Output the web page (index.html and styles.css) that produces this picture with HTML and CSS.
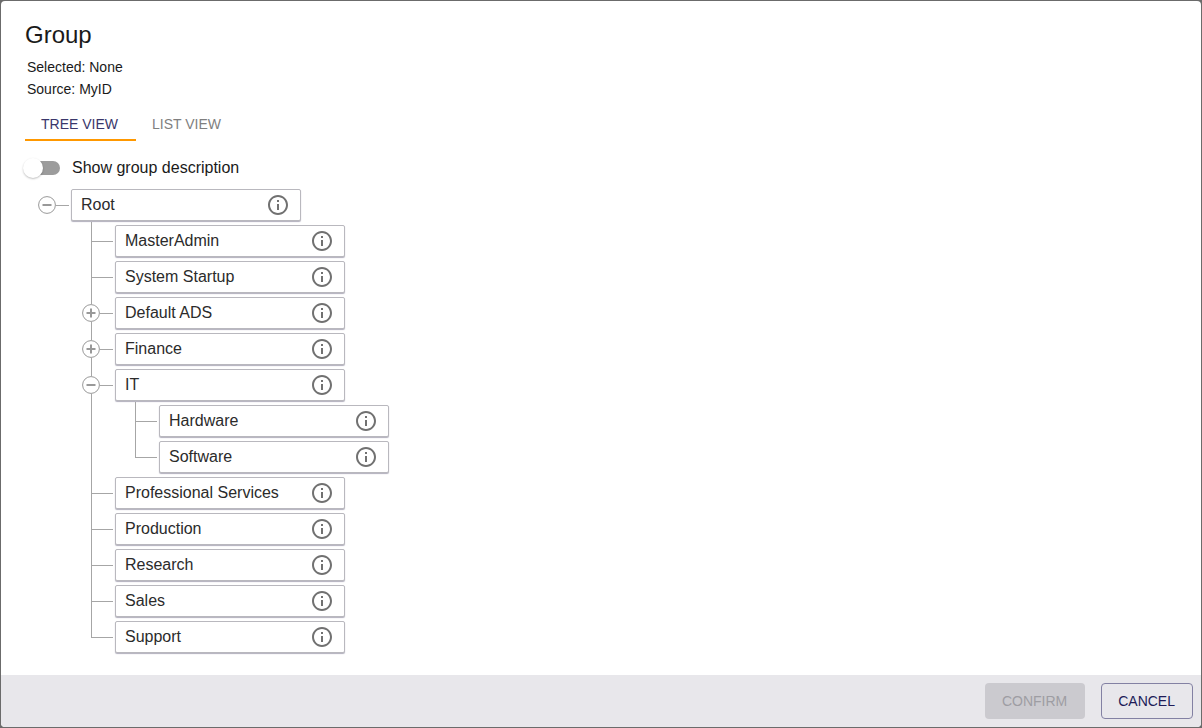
FILE: index.html
```
<!DOCTYPE html>
<html lang="en">
<head>
<meta charset="utf-8">
<title>Group</title>
<link rel="stylesheet" href="styles.css">
</head>
<body>
<svg class="sprite" aria-hidden="true">
  <symbol id="info" viewBox="0 0 24 24"><path d="M11 7h2v2h-2zm0 4h2v6h-2zm1-9C6.480 2 2 6.480 2 12s4.480 10 10 10 10-4.480 10-10S17.520 2 12 2zm0 18c-4.410 0-8-3.590-8-8s3.590-8 8-8 8 3.590 8 8-3.590 8-8 8z"/></symbol>
  <symbol id="minus" viewBox="0 0 18 18"><circle cx="9" cy="9" r="8.400"/><path class="sign" d="M4.500 9h9"/></symbol>
  <symbol id="plus" viewBox="0 0 18 18"><circle cx="9" cy="9" r="8.400"/><path class="sign" d="M4.500 9h9M9 4.500v9"/></symbol>
</svg>
<main class="dialog" role="dialog" aria-labelledby="title">
  <div class="content">
    <h1 class="title" id="title">Group</h1>
    <p class="detail">Selected: None</p>
    <p class="detail">Source: MyID</p>
    <div class="tabs" role="tablist">
      <button class="tab tab-active" role="tab" aria-selected="true">TREE VIEW</button>
      <button class="tab" role="tab" aria-selected="false">LIST VIEW</button>
    </div>
    <label class="switch"><input class="switch-input" type="checkbox" role="switch">Show group description</label>
    <ul class="tree">
      <li class="node">
        <div class="row"><button class="toggle" aria-label="Collapse Root"><svg><use href="#minus"/></svg></button><div class="card"><span>Root</span><button class="info" aria-label="About Root"><svg><use href="#info"/></svg></button></div></div>
        <ul class="children">
          <li class="node"><div class="row"><div class="card"><span>MasterAdmin</span><button class="info" aria-label="About MasterAdmin"><svg><use href="#info"/></svg></button></div></div></li>
          <li class="node"><div class="row"><div class="card"><span>System Startup</span><button class="info" aria-label="About System Startup"><svg><use href="#info"/></svg></button></div></div></li>
          <li class="node"><div class="row"><button class="toggle" aria-label="Expand Default ADS"><svg><use href="#plus"/></svg></button><div class="card"><span>Default ADS</span><button class="info" aria-label="About Default ADS"><svg><use href="#info"/></svg></button></div></div></li>
          <li class="node"><div class="row"><button class="toggle" aria-label="Expand Finance"><svg><use href="#plus"/></svg></button><div class="card"><span>Finance</span><button class="info" aria-label="About Finance"><svg><use href="#info"/></svg></button></div></div></li>
          <li class="node"><div class="row"><button class="toggle" aria-label="Collapse IT"><svg><use href="#minus"/></svg></button><div class="card"><span>IT</span><button class="info" aria-label="About IT"><svg><use href="#info"/></svg></button></div></div>
            <ul class="children">
              <li class="node"><div class="row"><div class="card"><span>Hardware</span><button class="info" aria-label="About Hardware"><svg><use href="#info"/></svg></button></div></div></li>
              <li class="node"><div class="row"><div class="card"><span>Software</span><button class="info" aria-label="About Software"><svg><use href="#info"/></svg></button></div></div></li>
            </ul>
          </li>
          <li class="node"><div class="row"><div class="card"><span>Professional Services</span><button class="info" aria-label="About Professional Services"><svg><use href="#info"/></svg></button></div></div></li>
          <li class="node"><div class="row"><div class="card"><span>Production</span><button class="info" aria-label="About Production"><svg><use href="#info"/></svg></button></div></div></li>
          <li class="node"><div class="row"><div class="card"><span>Research</span><button class="info" aria-label="About Research"><svg><use href="#info"/></svg></button></div></div></li>
          <li class="node"><div class="row"><div class="card"><span>Sales</span><button class="info" aria-label="About Sales"><svg><use href="#info"/></svg></button></div></div></li>
          <li class="node"><div class="row"><div class="card"><span>Support</span><button class="info" aria-label="About Support"><svg><use href="#info"/></svg></button></div></div></li>
        </ul>
      </li>
    </ul>
  </div>
  <footer class="actions">
    <button class="button button-confirm" disabled>CONFIRM</button>
    <button class="button button-cancel">CANCEL</button>
  </footer>
</main>
</body>
</html>
```
FILE: styles.css
```
* { box-sizing: border-box; }
body {
  margin: 0;
  padding: 1px;
  min-height: 100vh;
  display: flex;
  background: #6b6b6b;
  color: #2b2b2b;
  font-family: "Liberation Sans", Arial, sans-serif;
  font-size: 16px;
}
button { font: inherit; margin: 0; padding: 0; border: 0; background: none; cursor: pointer; }
ul { list-style: none; margin: 0; padding: 0; }
.sprite { display: none; }
.dialog {
  flex: 1;
  display: flex;
  flex-direction: column;
  background: #fff;
  border-radius: 4px;
  overflow: hidden;
}
.content { flex: 1; padding: 16px 24px; }
.title { margin: 0 0 3px; font-size: 24px; line-height: 36px; font-weight: 400; color: #1a1a1a; }
.detail { margin: 0 2px; font-size: 14px; line-height: 22px; color: #1a1a1a; }
.tabs { display: flex; margin-top: 9px; }
.tab {
  height: 32px;
  padding: 0 18px 0 16px;
  border-bottom: 2px solid transparent;
  font-size: 14px;
  color: #7f7f7f;
}
.tab-active { color: #3a376b; border-color: #ff9800; }
.switch { display: flex; align-items: center; gap: 12px; margin-top: 14px; height: 26px; width: fit-content; color: #1a1a1a; }
.switch-input {
  appearance: none;
  position: relative;
  width: 34px;
  height: 14px;
  margin: 0 0 0 1px;
  border-radius: 7px;
  background: #9c9c9c;
}
.switch-input::before {
  content: "";
  position: absolute;
  left: -3px;
  top: -3px;
  width: 20px;
  height: 20px;
  border-radius: 50%;
  background: #fff;
  box-shadow: 0 1px 2px rgba(0, 0, 0, .25);
}
.tree { margin: 6px 0 0 2px; }
.children { padding-left: 44px; }
.node { position: relative; }
.children > .node::before {
  content: "";
  position: absolute;
  left: 20px;
  top: -1px;
  bottom: 0;
  border-left: 1px solid #a6a6a6;
}
.children > .node:last-child::before { bottom: auto; height: 20px; }
.row { position: relative; display: flex; align-items: center; height: 36px; padding-left: 44px; }
.row::before {
  content: "";
  position: absolute;
  left: 20px;
  top: 18px;
  width: 22px;
  border-top: 1px solid #a6a6a6;
}
.toggle {
  position: absolute;
  left: 11px;
  top: 9px;
  width: 18px;
  height: 18px;
  border-radius: 50%;
  background: #fff;
}
.toggle svg { display: block; width: 18px; height: 18px; fill: none; stroke: #999; }
.sign { stroke-width: 2; }
.card {
  display: flex;
  align-items: center;
  justify-content: space-between;
  width: 230px;
  height: 32px;
  padding: 0 10px 0 9px;
  border: 1px solid #b9b8be;
  border-radius: 2px;
  background: #fff;
  box-shadow: 0 1px 1px #b2b0bd;
}
.info svg { display: block; width: 24px; height: 24px; fill: #717171; }
.actions {
  display: flex;
  justify-content: flex-end;
  gap: 16px;
  padding: 8px;
  background: #e8e7eb;
}
.button { height: 36px; padding: 0 18px 0 17px; border-radius: 4px; font-size: 14px; }
.button-confirm { background: #cbcacf; color: #9e9da3; }
.button-cancel { border: 1px solid #8381a3; padding: 0 17px 0 16px; color: #201c58; }
```
